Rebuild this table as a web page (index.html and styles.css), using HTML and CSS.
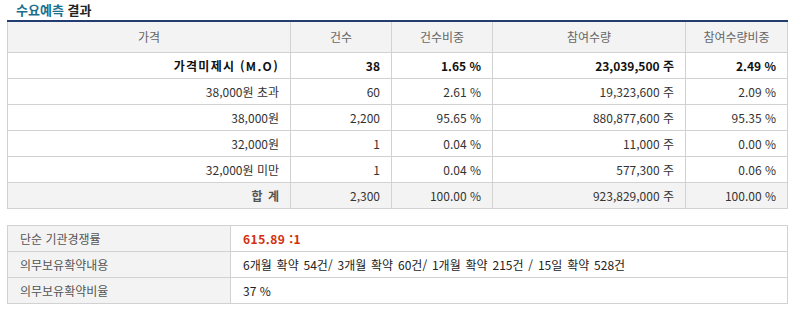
FILE: index.html
```html
<!DOCTYPE html>
<html lang="ko">
<head>
<meta charset="utf-8">
<link rel="stylesheet" href="styles.css">
</head>
<body>
<div class="wrap">
  <h3 class="title"><span class="accent">수요예측</span> 결과</h3>
  <table class="grid">
    <colgroup>
      <col class="c1"><col class="c2"><col class="c3"><col class="c4"><col class="c5">
    </colgroup>
    <thead>
      <tr><th>가격</th><th>건수</th><th>건수비중</th><th>참여수량</th><th>참여수량비중</th></tr>
    </thead>
    <tbody>
      <tr class="bold"><td class="mo">가격미제시 (M.O)</td><td>38</td><td>1.65 %</td><td>23,039,500 주</td><td>2.49 %</td></tr>
      <tr><td>38,000원 초과</td><td>60</td><td>2.61 %</td><td>19,323,600 주</td><td>2.09 %</td></tr>
      <tr><td>38,000원</td><td>2,200</td><td>95.65 %</td><td>880,877,600 주</td><td>95.35 %</td></tr>
      <tr><td>32,000원</td><td>1</td><td>0.04 %</td><td>11,000 주</td><td>0.00 %</td></tr>
      <tr><td>32,000원 미만</td><td>1</td><td>0.04 %</td><td>577,300 주</td><td>0.06 %</td></tr>
      <tr class="total"><td class="sum">합 계</td><td>2,300</td><td>100.00 %</td><td>923,829,000 주</td><td>100.00 %</td></tr>
    </tbody>
  </table>
  <table class="info">
    <colgroup><col class="k"><col class="v"></colgroup>
    <tbody>
      <tr><th>단순 기관경쟁률</th><td class="red">615.89 :1</td></tr>
      <tr><th>의무보유확약내용</th><td class="wide">6개월 확약 54건/ 3개월 확약 60건/ 1개월 확약 215건 / 15일 확약 528건</td></tr>
      <tr><th>의무보유확약비율</th><td>37 %</td></tr>
    </tbody>
  </table>
</div>
</body>
</html>
```

FILE: styles.css
```css
html, body {
  margin: 0;
  padding: 0;
  background: #fff;
}
body {
  font-family: "Noto Sans CJK KR", "Noto Sans", sans-serif;
  font-size: 12px;
  color: #333;
}
.wrap {
  padding: 0 5px 0 7px;
  width: 780px;
}
.title {
  margin: 0;
  padding: 0 0 0 9px;
  height: 20px;
  line-height: 19px;
  font-size: 13px;
  font-weight: bold;
  color: #222;
}
.title .accent {
  color: #1b6f8e;
}
table {
  border-collapse: collapse;
  table-layout: fixed;
  width: 780px;
}
.grid {
  border-top: 2px solid #233d72;
}
.grid .c1 { width: 283px; }
.grid .c2 { width: 101px; }
.grid .c3 { width: 101px; }
.grid .c4 { width: 193px; }
.grid .c5 { width: 102px; }
.grid th, .grid td {
  border: 1px solid #d2d2d2;
  line-height: 14px;
  white-space: nowrap;
}
.grid th {
  height: 30px;
  padding: 0;
  background: #f3f3f3;
  font-weight: normal;
  color: #666;
  text-align: center;
}
.grid td {
  height: 25px;
  padding: 0 11px 0 0;
  text-align: right;
  color: #333;
}
.grid tr.bold td {
  font-weight: bold;
  color: #111;
}
.grid tr.bold td.mo {
  letter-spacing: 1.3px;
}
.grid tr.total td {
  background: #f3f3f3;
}
.grid td.sum {
  font-weight: bold;
  color: #555;
  word-spacing: 2px;
}
.info {
  margin-top: 16px;
}
.info .k { width: 223px; }
.info .v { width: 557px; }
.info th, .info td {
  border: 1px solid #d2d2d2;
  height: 25px;
  line-height: 14px;
  white-space: nowrap;
  text-align: left;
}
.info th {
  background: #f3f3f3;
  font-weight: normal;
  color: #555;
  padding: 0 0 0 12px;
}
.info td {
  padding: 0 0 0 12px;
  color: #222;
}
.info td.wide {
  word-spacing: 1.5px;
}
.info td.red {
  color: #d2300e;
  font-weight: bold;
  letter-spacing: 0.5px;
}
```
